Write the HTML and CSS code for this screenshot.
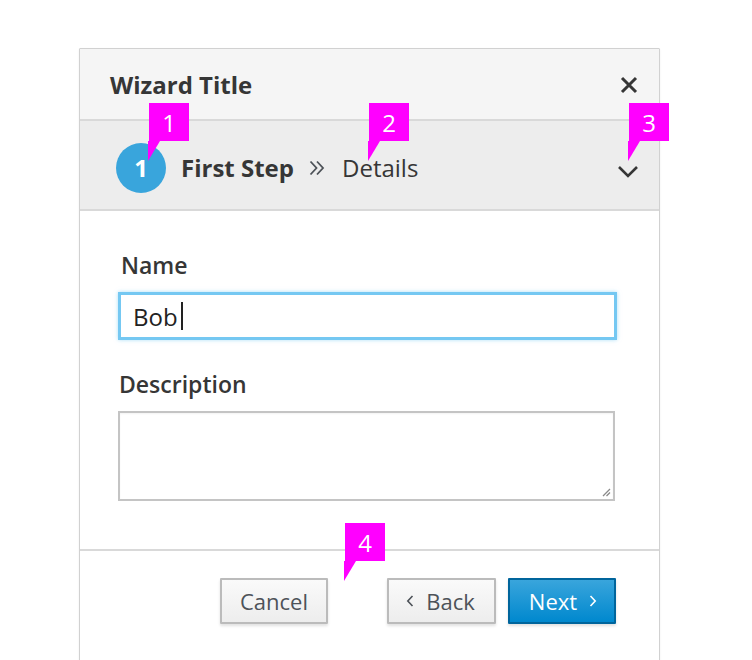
FILE: index.html
```html
<!DOCTYPE html>
<html>
<head>
<meta charset="utf-8">
<link rel="stylesheet" href="styles.css">
</head>
<body>
<div class="stage">
  <div class="modal">
    <div class="header">
      <h1 class="title">Wizard Title</h1>
      <svg class="close" width="18" height="18" viewBox="0 0 18 18"><path d="M2 2 L16 16 M16 2 L2 16" stroke="#363636" stroke-width="3" fill="none"/></svg>
    </div>
    <div class="steps">
      <div class="circle">1</div>
      <span class="step-main">First Step</span>
      <svg class="dbl" width="16" height="16" viewBox="0 0 16 16"><path d="M1.5 1.5 L7.5 8 L1.5 14.5 M8 1.5 L14 8 L8 14.5" stroke="#4d5258" stroke-width="1.8" fill="none"/></svg>
      <span class="step-sub">Details</span>
      <svg class="chev" width="22" height="14" viewBox="0 0 22 14"><path d="M2 2 L11 11 L20 2" stroke="#363636" stroke-width="2.6" fill="none"/></svg>
    </div>
    <div class="body">
      <label class="label">Name</label>
      <div class="input"><span>Bob</span><span class="caret"></span></div>
      <label class="label label-desc">Description</label>
      <div class="textarea">
        <svg class="grip" width="10" height="10" viewBox="0 0 10 10"><path d="M9 2 L2 9 M9 5.5 L5.5 9" stroke="#8a8a8a" stroke-width="1.3"/></svg>
      </div>
    </div>
    <div class="footer">
      <button class="btn cancel">Cancel</button>
      <button class="btn back"><svg class="arr-l" width="8" height="12" viewBox="0 0 8 12"><path d="M6.5 1 L1.8 6 L6.5 11" stroke="#4d5258" stroke-width="1.6" fill="none"/></svg>Back</button>
      <button class="btn primary">Next<svg class="arr-r" width="8" height="12" viewBox="0 0 8 12"><path d="M1.5 1 L6.2 6 L1.5 11" stroke="#fff" stroke-width="1.6" fill="none"/></svg></button>
    </div>
  </div>
  <div class="callout c1">1</div>
  <div class="callout c2">2</div>
  <div class="callout c3">3</div>
  <div class="callout c4">4</div>
</div>
</body>
</html>
```
FILE: styles.css
```css
* { box-sizing: border-box; }
html, body { margin: 0; padding: 0; background: #fff; }
body { font-family: "Open Sans", "Liberation Sans", sans-serif; color: #363636; }
.stage { position: relative; width: 752px; height: 660px; overflow: hidden; }
.modal {
  position: absolute; left: 79px; top: 48px; width: 581px; height: 640px;
  border: 1px solid #d1d1d1; border-radius: 1px; background: #fff;
  box-shadow: 0 1px 2px rgba(0,0,0,0.08);
}
.header {
  height: 72px; background: #f5f5f5; border-bottom: 2px solid #d9d9d9;
  display: flex; align-items: center; justify-content: space-between;
  padding: 0 21px 0 30px;
}
.title { margin: 0; font-size: 24px; line-height: 32px; font-weight: 700; color: #363636; position: relative; top: 1px; }
.close { display: block; position: relative; top: 1px; }
.steps {
  height: 90px; background: #ededed; border-bottom: 2px solid #d9d9d9;
  display: flex; align-items: center; padding: 5px 20px 0 36px;
}
.circle {
  width: 50px; height: 50px; border-radius: 50%; background: #39a5dc; color: #fff;
  font-weight: 700; font-size: 24px; display: flex; align-items: center; justify-content: center;
  margin-right: 15px;
}
.step-main { font-size: 24px; font-weight: 700; color: #363636; }
.dbl { margin: 0 17px 0 15px; }
.step-sub { font-size: 24px; color: #363636; }
.chev { margin-left: auto; position: relative; top: 4px; }
.body { padding: 39px 41px 48px 38px; display: flex; flex-direction: column; }
.label { font-size: 23px; line-height: 30px; font-weight: 600; color: #363636; margin-left: 3px; }
.input {
  margin-top: 12px; height: 48px; width: 499px; border: 3px solid #75c8f2; flex-shrink: 0;
  box-shadow: 0 0 4px rgba(117,200,242,0.6);
  display: flex; align-items: center; padding-left: 12px; font-size: 24px; color: #222;
}
.caret { display: inline-block; width: 2px; height: 28px; background: #222; margin-left: 3px; }
.label-desc { margin-top: 29px; margin-left: 1px; }
.textarea {
  margin-top: 12px; height: 90px; width: 497px; border: 2px solid #c4c4c4; position: relative; flex-shrink: 0;
  box-shadow: inset 0 1px 2px rgba(0,0,0,0.05);
}
.grip { position: absolute; right: 2px; bottom: 2px; }
.footer {
  border-top: 2px solid #d9d9d9; padding: 27px 42px 0 140px;
  display: flex; align-items: flex-start;
}
.btn {
  font-family: "Open Sans", "Liberation Sans", sans-serif; font-size: 22px; color: #4d5258;
  height: 46px; padding: 0; border: 2px solid #bbb; border-radius: 1px;
  background: linear-gradient(#fafafa, #ededed); box-shadow: 0 2px 3px rgba(0,0,0,0.12);
  display: flex; align-items: center; justify-content: center;
}
.cancel { width: 108px; }
.back { margin-left: 59px; width: 109px; }
.primary {
  margin-left: 12px; width: 108px;
  background: linear-gradient(#39a5dc, #0088ce); border-color: #00659c; color: #fff;
}
.arr-l { margin-right: 12px; margin-left: -2px; }
.arr-r { margin-left: 12px; margin-right: -2px; }
.callout {
  position: absolute; width: 40px; height: 38px; background: #ff00ff; color: #fff;
  font-size: 24px; display: flex; align-items: center; justify-content: center;
  font-family: "Open Sans", sans-serif;
}
.callout::after {
  content: ""; position: absolute; left: -1px; top: 38px; width: 12px; height: 20px;
  background: #ff00ff; clip-path: polygon(0 0, 100% 0, 0 100%);
}
.c1 { left: 149px; top: 103px; }
.c2 { left: 369px; top: 103px; }
.c3 { left: 629px; top: 103px; }
.c4 { left: 345px; top: 523px; }
```
